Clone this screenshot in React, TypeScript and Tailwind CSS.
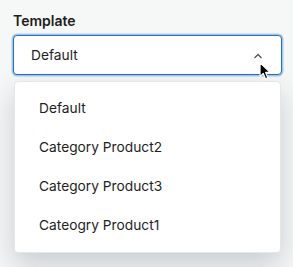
import React from "react";

const options = ["Default", "Category Product2", "Category Product3", "Cateogry Product1"];

function Cursor() {
	return (
		<svg
			className="absolute left-[259px] top-[62px]"
			width="13"
			height="19"
			viewBox="0 0 14 21"
		>
			<path
				d="M1 1 L1 16 L4.5 12.5 L7 18.5 L9.5 17.5 L7 11.5 L12 11.5 Z"
				fill="#000"
				stroke="#fff"
				strokeWidth="1.2"
				strokeLinejoin="round"
			/>
		</svg>
	);
}

export default function App() {
	return (
		<div
			className="relative h-[267px] w-[293px] overflow-hidden bg-[#f6f7f7] pl-[13px] pr-[11px] pt-[11px]"
			style={{ fontFamily: "Inter, 'Noto Sans', sans-serif" }}
		>
			<label className="block text-[14px] font-semibold leading-[20px] text-[#1e1e1e]">
				Template
			</label>
			<div className="mt-[4px] flex h-[40px] items-center justify-between rounded-[4px] border border-[#2271b1] bg-white pl-[17px] pr-[18px] shadow-[0_0_0_1.5px_#a7c8e8]">
				<span className="text-[13.75px] text-[#1e1e1e]">Default</span>
				<svg width="10" height="6" viewBox="0 0 10 6" className="mt-[1px]">
					<path d="M1.5 5 L5 1.5 L8.5 5" fill="none" stroke="#50575e" strokeWidth="1.3" />
				</svg>
			</div>
			<div className="ml-[1px] mr-[1px] mt-[6px] rounded-[4px] border border-[#e4e6e8] bg-white py-[7px] shadow-[0_12px_28px_rgba(40,55,70,0.22)]">
				{options.map((o) => (
					<div
						key={o}
						className="flex h-[39px] items-center pl-[24px] text-[13.75px] text-[#1e1e1e]"
					>
						{o}
					</div>
				))}
			</div>
			<Cursor />
		</div>
	);
}
